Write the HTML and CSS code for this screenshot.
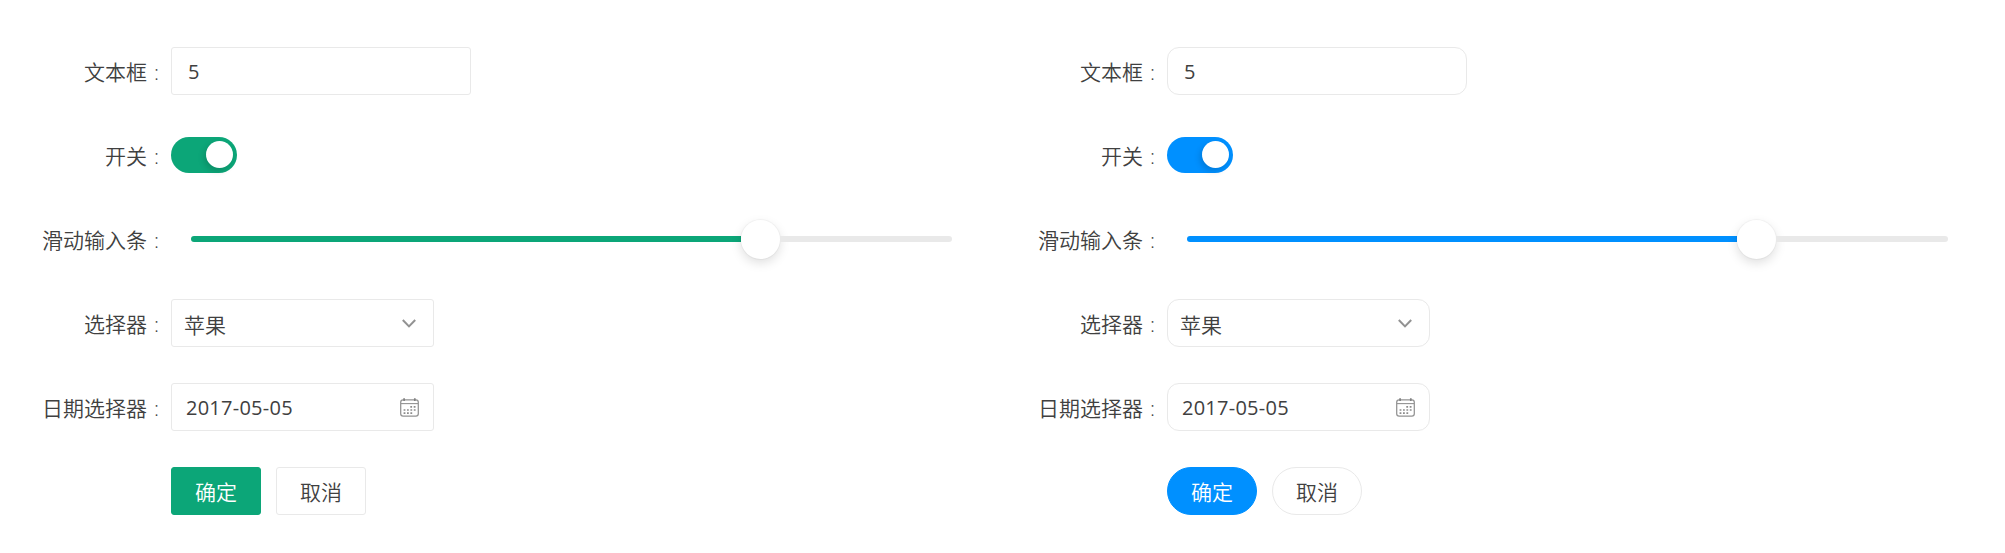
FILE: index.html
```html
<!DOCTYPE html>
<html lang="zh-CN">
<head>
<meta charset="utf-8">
<title>表单主题</title>
<link rel="stylesheet" href="styles.css">
</head>
<body>
<svg width="0" height="0" class="sprite" aria-hidden="true">
  <symbol id="chevron" viewBox="0 0 14 9"><path d="M0.8 1 L7 7.4 L13.2 1" fill="none" stroke="#929292" stroke-width="2"/></symbol>
  <symbol id="calendar" viewBox="0 0 19 19">
    <rect x="0.7" y="1.9" width="17.6" height="16.2" rx="2.4" fill="none" stroke="#929292" stroke-width="1.25"/>
    <path d="M1 5.6H18" stroke="#929292" stroke-width="1.1"/>
    <path d="M4.1 0.2V3M14.8 0.2V3" stroke="#808080" stroke-width="1.7"/>
    <path d="M10.3 8.8H15.7M3.6 12H15.7M3.6 15.2H12.5" stroke="#8c8c8c" stroke-width="1.7" stroke-dasharray="1.8 1.6"/>
  </symbol>
</svg>
<main class="page">
  <form class="form theme-green">
    <div class="row"><label class="label">文本框<span class="colon">:</span></label><div class="box text-input">5</div></div>
    <div class="row"><label class="label">开关<span class="colon">:</span></label><div class="switch"><span class="knob"></span></div></div>
    <div class="row"><label class="label">滑动输入条<span class="colon">:</span></label><div class="slider"><span class="fill"></span><span class="handle"></span><span class="rest"></span></div></div>
    <div class="row"><label class="label">选择器<span class="colon">:</span></label><div class="box select"><span>苹果</span><svg class="chevron"><use href="#chevron"/></svg></div></div>
    <div class="row"><label class="label">日期选择器<span class="colon">:</span></label><div class="box date"><span>2017-05-05</span><svg class="calendar"><use href="#calendar"/></svg></div></div>
    <div class="row actions"><button type="button" class="btn primary">确定</button><button type="button" class="btn">取消</button></div>
  </form>
  <form class="form theme-blue">
    <div class="row"><label class="label">文本框<span class="colon">:</span></label><div class="box text-input">5</div></div>
    <div class="row"><label class="label">开关<span class="colon">:</span></label><div class="switch"><span class="knob"></span></div></div>
    <div class="row"><label class="label">滑动输入条<span class="colon">:</span></label><div class="slider"><span class="fill"></span><span class="handle"></span><span class="rest"></span></div></div>
    <div class="row"><label class="label">选择器<span class="colon">:</span></label><div class="box select"><span>苹果</span><svg class="chevron"><use href="#chevron"/></svg></div></div>
    <div class="row"><label class="label">日期选择器<span class="colon">:</span></label><div class="box date"><span>2017-05-05</span><svg class="calendar"><use href="#calendar"/></svg></div></div>
    <div class="row actions"><button type="button" class="btn primary">确定</button><button type="button" class="btn">取消</button></div>
  </form>
</main>
</body>
</html>
```

FILE: styles.css
```css
* { box-sizing: border-box; }
body {
  margin: 0;
  background: #fff;
  color: #404040;
  font: 350 21px/30px "Noto Sans CJK SC", sans-serif;
}
.sprite { display: block; }
.page {
  display: grid;
  grid-template-columns: 996px 996px;
  height: 553px;
  padding-top: 47px;
}
.form {
  display: flex;
  flex-direction: column;
  gap: 36px;
}
.theme-green { --main: #0ca678; --radius: 3px; --btn-radius: 3px; }
.theme-blue { --main: #0090ff; --radius: 12px; --btn-radius: 24px; }
.row {
  display: flex;
  align-items: center;
  height: 48px;
}
.label {
  display: flex;
  justify-content: flex-end;
  width: 171px;
  padding: 0 12px 0 0;
  white-space: nowrap;
}
.colon {
  width: 12px;
  padding-top: 1px;
  text-align: right;
  font-family: "Open Sans", sans-serif;
}
.box {
  display: flex;
  align-items: center;
  justify-content: space-between;
  width: 263px;
  height: 48px;
  border: 1px solid #e9e9e9;
  border-radius: var(--radius);
}
.text-input {
  width: 300px;
  padding: 2px 15px 0 16px;
  font-family: "Open Sans", sans-serif;
  font-size: 20px;
  font-weight: 400;
}
.select { padding: 0 17px 0 12px; }
.select span { padding-top: 1px; }
.date { padding: 0 14px; }
.date span {
  padding-top: 2px;
  font-family: "Open Sans", sans-serif;
  font-size: 20px;
  font-weight: 400;
  letter-spacing: 0.25px;
}
.chevron { width: 14px; height: 9px; }
.calendar { width: 19px; height: 19px; }
.switch {
  display: flex;
  justify-content: flex-end;
  width: 66px;
  height: 36px;
  padding: 4px;
  border-radius: 18px;
  background: var(--main);
}
.knob {
  width: 27px;
  height: 27px;
  border-radius: 50%;
  background: #fff;
  box-shadow: -2px 3px 6px rgba(0, 0, 0, 0.15);
}
.slider {
  display: flex;
  align-items: center;
  width: 761px;
  margin-left: 20px;
}
.fill {
  width: 550px;
  height: 6px;
  border-radius: 3px 0 0 3px;
  background: var(--main);
}
.handle {
  width: 39px;
  height: 39px;
  border-radius: 50%;
  background: #fff;
  box-shadow: 0 0 0 1px rgba(0, 0, 0, 0.03), 0 4px 11px rgba(0, 0, 0, 0.13);
}
.rest {
  flex: 1;
  height: 6px;
  border-radius: 0 3px 3px 0;
  background: #e9e9e9;
}
.actions { gap: 15px; padding-left: 171px; }
.btn {
  width: 90px;
  height: 48px;
  padding: 0;
  border: 1px solid #e9e9e9;
  border-radius: var(--btn-radius);
  background: #fff;
  color: inherit;
  font: inherit;
}
.primary {
  border-color: var(--main);
  background: var(--main);
  color: #fff;
}
```
